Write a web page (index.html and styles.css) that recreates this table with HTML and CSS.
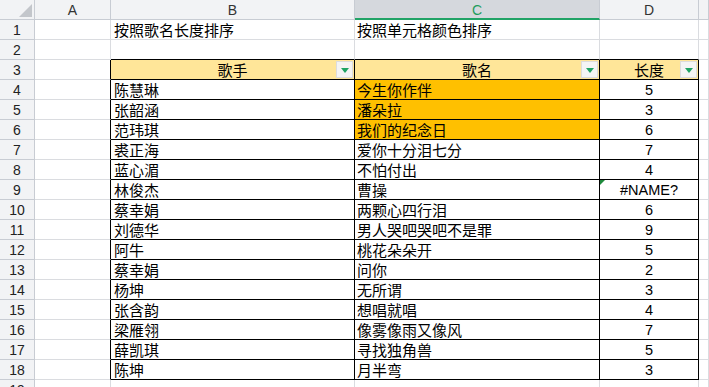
FILE: index.html
```html
<!DOCTYPE html>
<html lang="zh-CN">
<head>
<meta charset="utf-8">
<title>排序</title>
<link rel="stylesheet" href="styles.css">
</head>
<body>
<div class="sheet">
  <div class="row head">
    <div class="corner"><span class="tri"></span></div>
    <div class="ch">A</div>
    <div class="ch">B</div>
    <div class="ch sel">C</div>
    <div class="ch">D</div>
    <div class="ch"></div>
  </div>
  <div class="row">
    <div class="rh">1</div><div class="c"></div>
    <div class="c t">按照歌名长度排序</div>
    <div class="c t c2">按照单元格颜色排序</div>
    <div class="c"></div><div class="c"></div>
  </div>
  <div class="row">
    <div class="rh">2</div><div class="c"></div>
    <div class="c top"></div><div class="c top"></div><div class="c top"></div><div class="c"></div>
  </div>
  <div class="row">
    <div class="rh">3</div><div class="c lb"></div>
    <div class="c bx th"><span class="hl">歌手</span><span class="fb"></span></div>
    <div class="c bx th"><span class="hl">歌名</span><span class="fb"></span></div>
    <div class="c bx th"><span class="hl">长度</span><span class="fb"></span></div>
    <div class="c"></div>
  </div>
  <div class="row">
    <div class="rh">4</div><div class="c lb"></div>
    <div class="c bx t">陈慧琳</div><div class="c bx t c2 org">今生你作伴</div><div class="c bx n">5</div><div class="c"></div>
  </div>
  <div class="row">
    <div class="rh">5</div><div class="c lb"></div>
    <div class="c bx t">张韶涵</div><div class="c bx t c2 org">潘朵拉</div><div class="c bx n">3</div><div class="c"></div>
  </div>
  <div class="row">
    <div class="rh">6</div><div class="c lb"></div>
    <div class="c bx t">范玮琪</div><div class="c bx t c2 org">我们的纪念日</div><div class="c bx n">6</div><div class="c"></div>
  </div>
  <div class="row">
    <div class="rh">7</div><div class="c lb"></div>
    <div class="c bx t">裘正海</div><div class="c bx t c2">爱你十分泪七分</div><div class="c bx n">7</div><div class="c"></div>
  </div>
  <div class="row">
    <div class="rh">8</div><div class="c lb"></div>
    <div class="c bx t">蓝心湄</div><div class="c bx t c2">不怕付出</div><div class="c bx n">4</div><div class="c"></div>
  </div>
  <div class="row">
    <div class="rh">9</div><div class="c lb"></div>
    <div class="c bx t">林俊杰</div><div class="c bx t c2">曹操</div><div class="c bx n err">#NAME?</div><div class="c"></div>
  </div>
  <div class="row">
    <div class="rh">10</div><div class="c lb"></div>
    <div class="c bx t">蔡幸娟</div><div class="c bx t c2">两颗心四行泪</div><div class="c bx n">6</div><div class="c"></div>
  </div>
  <div class="row">
    <div class="rh">11</div><div class="c lb"></div>
    <div class="c bx t">刘德华</div><div class="c bx t c2">男人哭吧哭吧不是罪</div><div class="c bx n">9</div><div class="c"></div>
  </div>
  <div class="row">
    <div class="rh">12</div><div class="c lb"></div>
    <div class="c bx t">阿牛</div><div class="c bx t c2">桃花朵朵开</div><div class="c bx n">5</div><div class="c"></div>
  </div>
  <div class="row">
    <div class="rh">13</div><div class="c lb"></div>
    <div class="c bx t">蔡幸娟</div><div class="c bx t c2">问你</div><div class="c bx n">2</div><div class="c"></div>
  </div>
  <div class="row">
    <div class="rh">14</div><div class="c lb"></div>
    <div class="c bx t">杨坤</div><div class="c bx t c2">无所谓</div><div class="c bx n">3</div><div class="c"></div>
  </div>
  <div class="row">
    <div class="rh">15</div><div class="c lb"></div>
    <div class="c bx t">张含韵</div><div class="c bx t c2">想唱就唱</div><div class="c bx n">4</div><div class="c"></div>
  </div>
  <div class="row">
    <div class="rh">16</div><div class="c lb"></div>
    <div class="c bx t">梁雁翎</div><div class="c bx t c2">像雾像雨又像风</div><div class="c bx n">7</div><div class="c"></div>
  </div>
  <div class="row">
    <div class="rh">17</div><div class="c lb"></div>
    <div class="c bx t">薛凯琪</div><div class="c bx t c2">寻找独角兽</div><div class="c bx n">5</div><div class="c"></div>
  </div>
  <div class="row">
    <div class="rh">18</div><div class="c lb"></div>
    <div class="c bx t">陈坤</div><div class="c bx t c2">月半弯</div><div class="c bx n">3</div><div class="c"></div>
  </div>
  <div class="row">
    <div class="rh">19</div><div class="c"></div>
    <div class="c"></div><div class="c"></div><div class="c"></div><div class="c"></div>
  </div>
</div>
</body>
</html>
```

FILE: styles.css
```css
html, body {
  margin: 0;
  padding: 0;
  background: #ffffff;
  overflow: hidden;
}

.sheet {
  display: flex;
  flex-direction: column;
  width: 709px;
  font-family: "Noto Sans CJK SC", "Noto Sans", sans-serif;
  font-size: 15px;
  color: #000;
}

.row {
  display: grid;
  grid-template-columns: 35px 76px 244px 245px 99px 10px;
  height: 20px;
}

.row > div {
  box-sizing: border-box;
  height: 20px;
  border-right: 1px solid #dadce0;
  border-bottom: 1px solid #dadce0;
  position: relative;
  overflow: hidden;
  white-space: nowrap;
}

/* column header */
.head > div {
  background: #f2f3f5;
  border-right-color: #c8ccd3;
  border-bottom-color: #c8ccd3;
}
.corner .tri {
  position: absolute;
  right: 2px;
  bottom: 2px;
  width: 0;
  height: 0;
  border-left: 13px solid transparent;
  border-bottom: 13px solid #c3c6cb;
}
.ch {
  font-family: "Liberation Sans", Arial, sans-serif;
  font-size: 14px;
  color: #333;
  display: flex;
  align-items: center;
  justify-content: center;
  padding-top: 1px;
}
.head > .ch.sel {
  background: #d5d8dd;
  color: #1f9d5c;
  border-bottom: 2px solid #21a366;
}

/* row header */
.rh {
  background: #f2f3f5;
  border-right-color: #c8ccd3 !important;
  border-bottom-color: #c8ccd3 !important;
  font-family: "Liberation Sans", Arial, sans-serif;
  font-size: 14px;
  color: #222;
  display: flex;
  align-items: flex-end;
  justify-content: center;
  line-height: 16px;
  padding-bottom: 1px;
}

/* cell text */
.t {
  display: flex;
  align-items: flex-end;
  padding-left: 3px;
  line-height: 18px;
}
.c2 { padding-left: 2px; }

.n {
  display: flex;
  align-items: flex-end;
  justify-content: center;
  font-family: "Liberation Sans", Arial, sans-serif;
  font-size: 14.5px;
  line-height: 17px;
}

/* table borders */
.row > .top { border-bottom-color: #000; }
.row > .lb { border-right-color: #000; }
.row > .bx {
  border-right-color: #000;
  border-bottom-color: #000;
}

.org { background: #ffc000; }

.th {
  background: #ffe699;
  display: flex;
  align-items: flex-end;
  justify-content: center;
  line-height: 18px;
}
.fb {
  position: absolute;
  right: 1px;
  top: 1px;
  width: 17px;
  height: 17px;
  box-sizing: border-box;
  background: #f4f4f4;
  border: 1px solid #dcdcdc;
}
.fb::after {
  content: "";
  position: absolute;
  left: 4px;
  top: 6px;
  width: 0;
  height: 0;
  border-left: 4px solid transparent;
  border-right: 4px solid transparent;
  border-top: 5px solid #1fa463;
}

.err::before {
  content: "";
  position: absolute;
  left: 0;
  top: 0;
  width: 0;
  height: 0;
  border-top: 5px solid #1e8a3c;
  border-right: 5px solid transparent;
}
```
